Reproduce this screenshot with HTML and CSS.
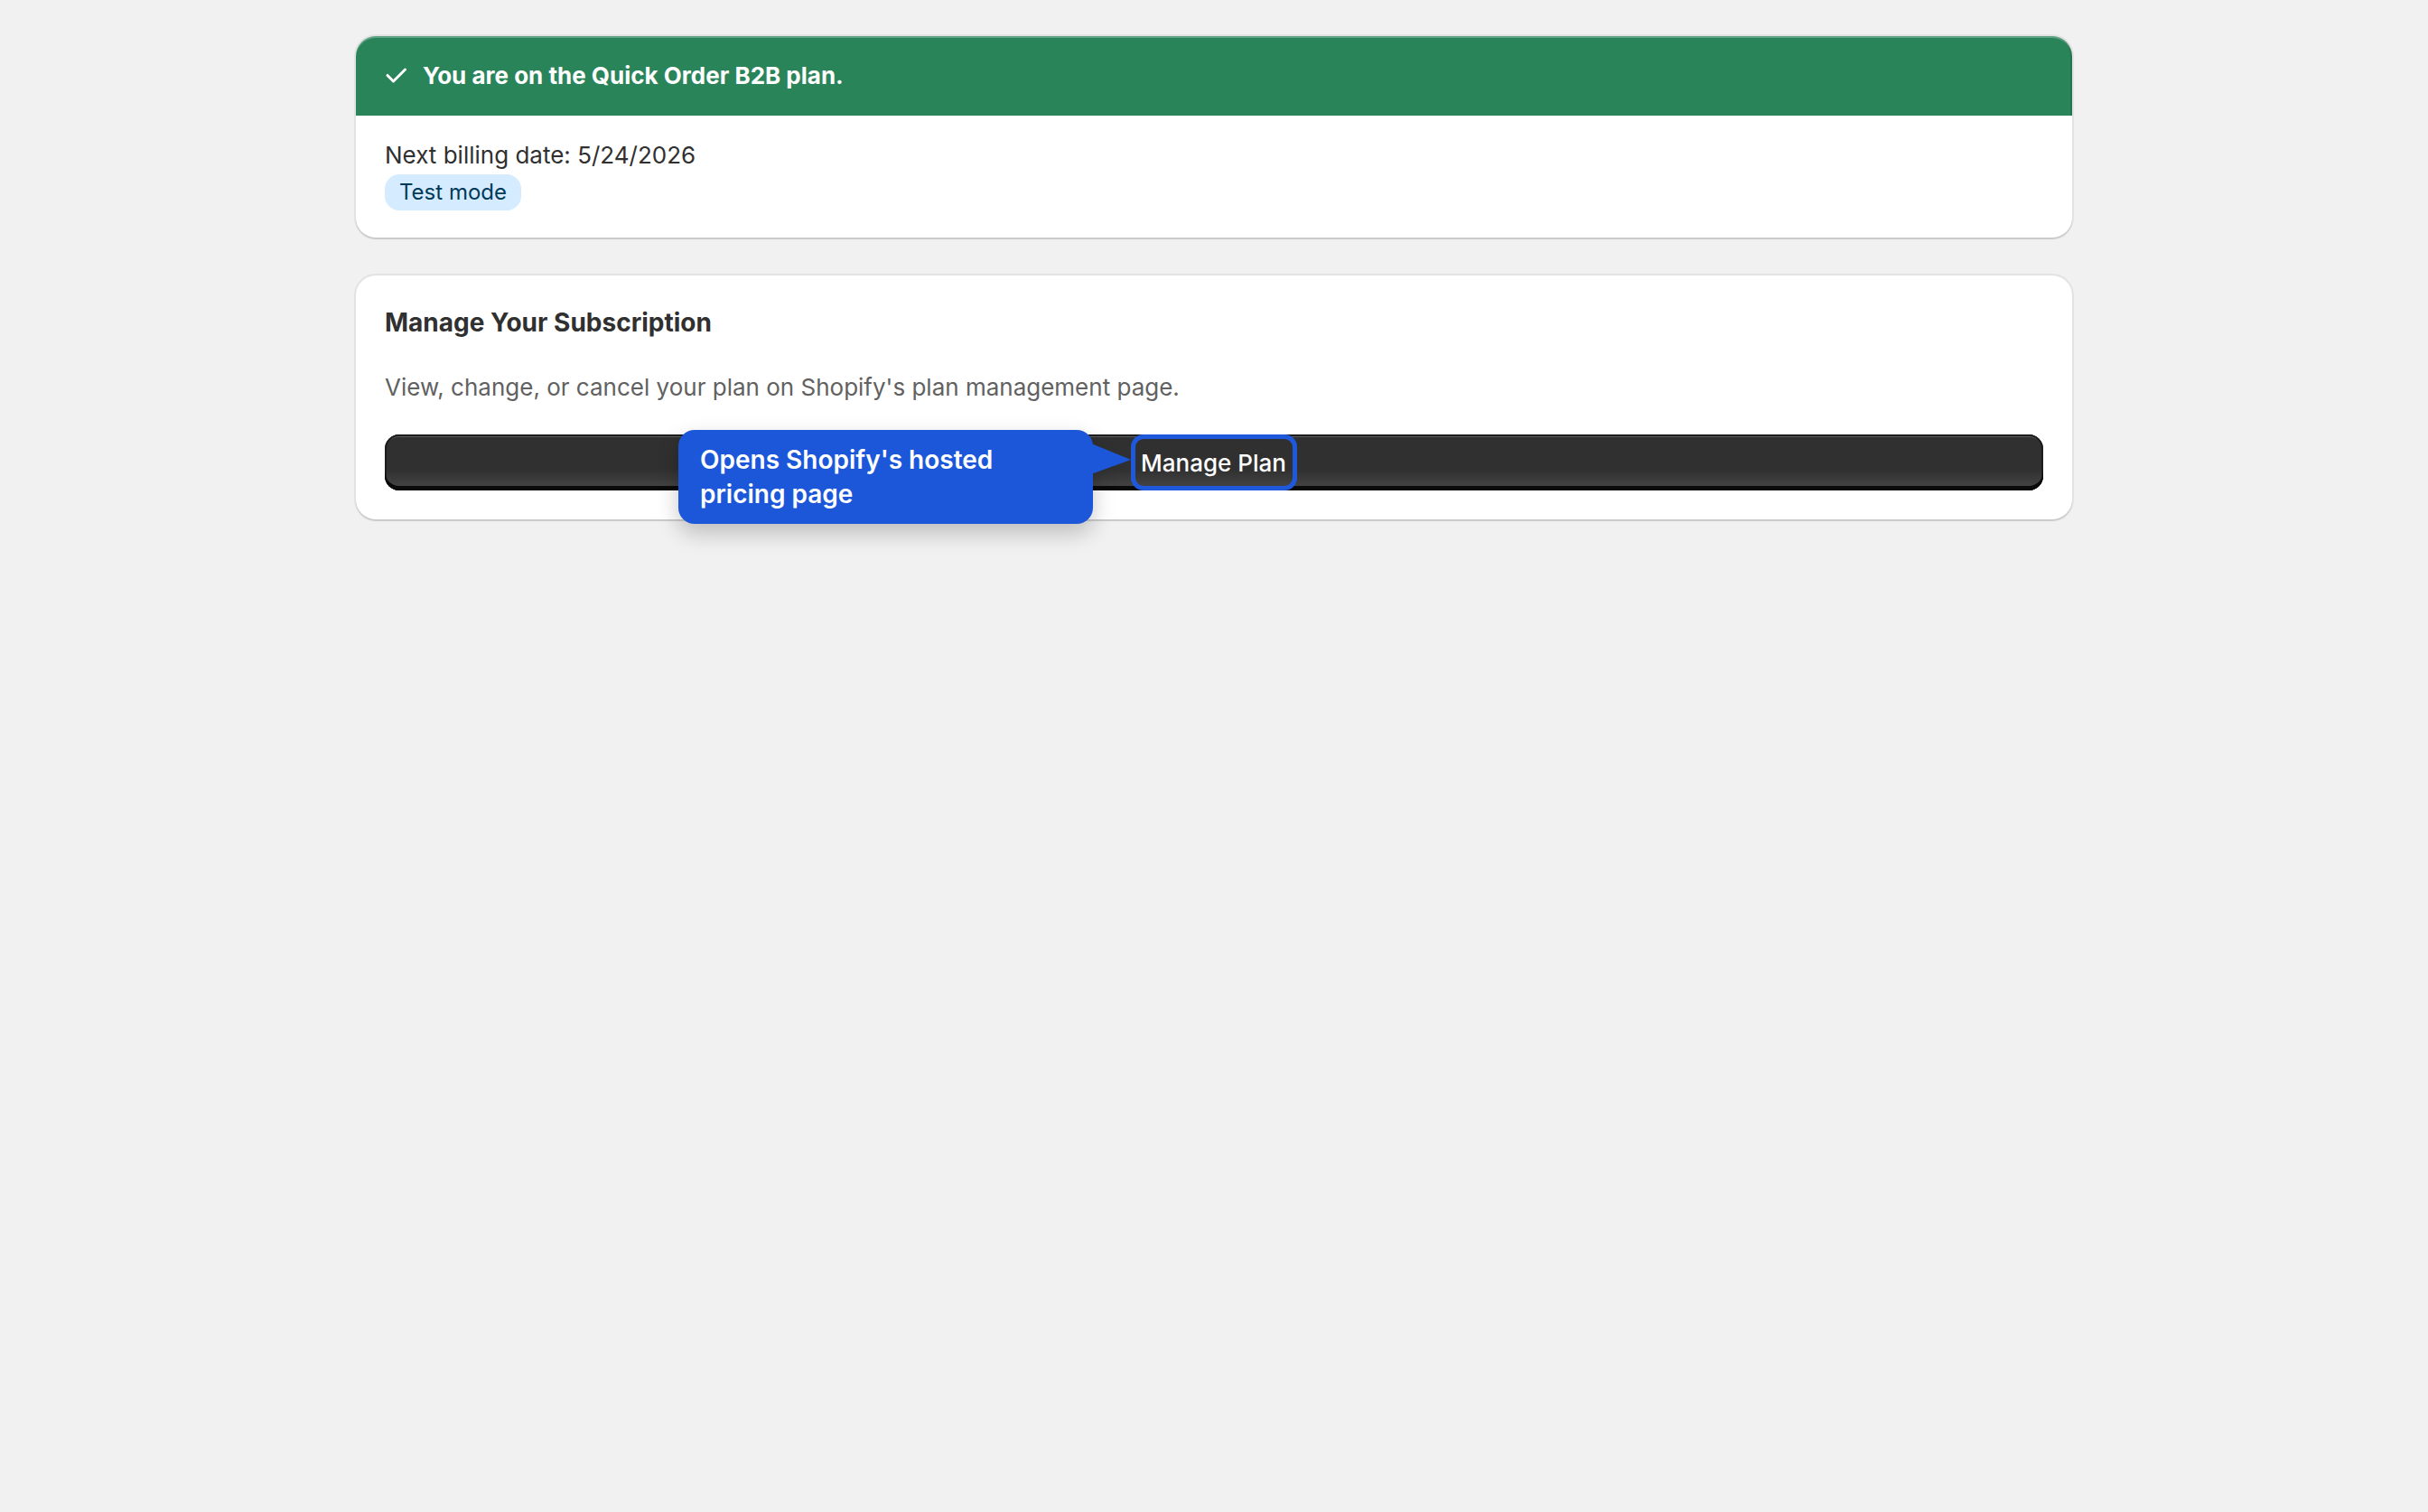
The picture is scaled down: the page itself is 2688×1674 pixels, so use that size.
FILE: index.html
```html
<!DOCTYPE html>
<html>
	<head>
		<meta charset="UTF-8">
		<title>Billing</title>
		<link rel="stylesheet" href="styles.css">
	</head>
	<body>
		<div class="page">
			<div class="card">
				<div class="banner">
					<span class="banner-icon">
						<svg viewBox="0 0 20 20" width="40" height="40"><path fill="#fff" d="M15.78 5.97a.75.75 0 0 1 0 1.06l-6.5 6.5a.75.75 0 0 1-1.06 0l-3.25-3.25a.75.75 0 1 1 1.06-1.06l2.72 2.72 5.97-5.97a.75.75 0 0 1 1.06 0Z"/></svg>
					</span>
					<span class="banner-text">You are on the Quick Order B2B plan.</span>
				</div>
				<div class="card-body tight">
					<p class="line">Next billing date: 5/24/2026</p>
					<span class="badge">Test mode</span>
				</div>
			</div>

			<div class="card">
				<div class="card-body">
					<h2 class="title">Manage Your Subscription</h2>
					<p class="muted">View, change, or cancel your plan on Shopify's plan management page.</p>
					<div class="action">
						<button class="btn-primary"><span class="btn-label">Manage Plan</span></button>
						<div class="callout">
							Opens Shopify's hosted pricing page
							<svg class="callout-arrow" viewBox="0 0 44 38" width="44" height="38"><polygon points="0,2 44,20 0,36" fill="#1c57da"/></svg>
						</div>
					</div>
				</div>
			</div>
		</div>
	</body>
</html>
```

FILE: styles.css
```css
html,body{
	min-height:100%;
}
body{
	margin:0;
	min-height:100vh;
	background:#f1f1f1;
	font-family:Inter,"Noto Sans",sans-serif;
	color:#303030;
	font-size:26px;
	line-height:40px;
}
.page{
	width:1900px;
	margin:0 auto;
	padding:40px 0 80px;
	display:flex;
	flex-direction:column;
	gap:42px;
}
.card{
	background:#fff;
	border-radius:22px;
	box-shadow:0 2px 1px rgba(26,26,26,.12), 0 0 0 2px #e3e3e3;
}
.banner{
	height:88px;
	box-sizing:border-box;
	padding:0 24px;
	display:flex;
	align-items:center;
	gap:10px;
	background:#29845a;
	border-radius:22px 22px 0 0;
	box-shadow:inset 0 2px 0 rgba(255,255,255,.25), inset -2px 0 0 rgba(0,0,0,.12);
	color:#fff;
	font-weight:650;
}
.banner-icon{
	display:flex;
	width:40px;
	height:40px;
}
.card-body{
	padding:32px;
}
.card-body.tight{
	padding:24px 32px 30px;
}
.line{
	margin:0;
}
.badge{
	display:inline-block;
	height:40px;
	line-height:40px;
	padding:0 16px;
	border-radius:16px;
	background:#d5ebff;
	color:#003a5a;
	font-size:24px;
}
.title{
	margin:0;
	font-size:28px;
	line-height:40px;
	font-weight:650;
}
.muted{
	margin:32px 0 0;
	color:#616161;
}
.action{
	position:relative;
	margin-top:32px;
}
.btn-primary{
	display:flex;
	justify-content:center;
	width:100%;
	height:62px;
	padding:0;
	border:0;
	border-radius:16px;
	background:linear-gradient(#303030 62%, #474747);
	box-shadow:inset 0 -5px 0 #0a0a0a, inset 0 0 0 2px #1c1c1c, inset 0 4px 0 -1px #5c5c5c;
	font-family:inherit;
	cursor:pointer;
}
.btn-label{
	box-sizing:border-box;
	height:62px;
	display:flex;
	align-items:center;
	padding:0 7px 0 6px;
	border:5px solid #1f59db;
	border-radius:14px;
	color:#fff;
	font-size:26px;
	font-weight:500;
}
.callout{
	position:absolute;
	z-index:2;
	left:325px;
	top:-5px;
	width:459px;
	height:104px;
	box-sizing:border-box;
	padding:14px 24px;
	background:#1c57da;
	color:#fff;
	border-radius:18px;
	font-weight:600;
	font-size:28px;
	line-height:38px;
	box-shadow:0 10px 24px rgba(0,0,0,.22);
}
.callout-arrow{
	position:absolute;
	left:100%;
	top:13px;
	margin-left:-2px;
}
```
